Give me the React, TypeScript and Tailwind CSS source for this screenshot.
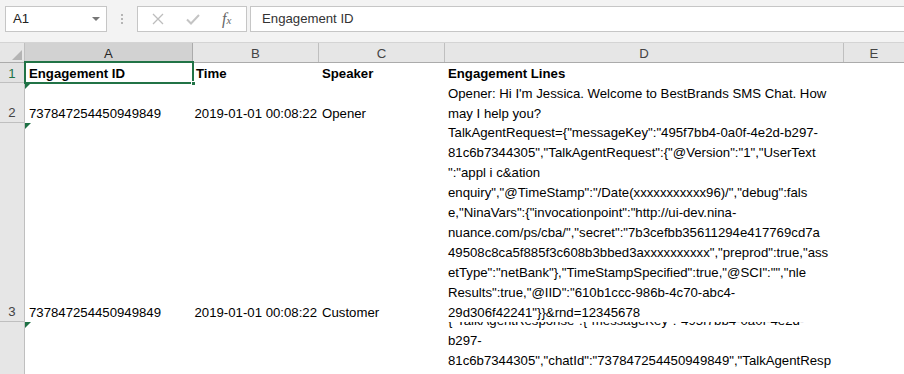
import React from 'react'

const row2 = ["Opener: Hi I'm Jessica. Welcome to BestBrands SMS Chat. How", 'may I help you?']

const row3 = [
  'TalkAgentRequest={"messageKey":"495f7bb4-0a0f-4e2d-b297-',
  '81c6b7344305","TalkAgentRequest":{"@Version":"1","UserText',
  '":"appl i c&ation',
  'enquiry","@TimeStamp":"/Date(xxxxxxxxxxx96)/","debug":fals',
  'e,"NinaVars":{"invocationpoint":"http://ui-dev.nina-',
  'nuance.com/ps/cba/","secret":"7b3cefbb35611294e417769cd7a',
  '49508c8ca5f885f3c608b3bbed3axxxxxxxxxx","preprod":true,"ass',
  'etType":"netBank"},"TimeStampSpecified":true,"@SCI":"","nle',
  'Results":true,"@IID":"610b1ccc-986b-4c70-abc4-',
  '29d306f42241"}}&rnd=12345678',
]

const row4 = [
  '{"TalkAgentResponse":{"messageKey":"495f7bb4-0a0f-4e2d-',
  'b297-',
  '81c6b7344305","chatId":"737847254450949849","TalkAgentResp',
  'onse":{"@Version":"1","Response":"',
]

const Flag = () => (
  <span className="absolute left-0 top-0 w-0 h-0 border-t-[6px] border-t-[#1e7145] border-r-[6px] border-r-transparent" />
)

function Lines({ lines }: { lines: string[] }) {
  return (
    <div className="h-full overflow-y-clip overflow-x-visible flex flex-col justify-end pl-[3px]">
      {lines.map((l, i) => (
        <div key={i} className="leading-[20px] whitespace-pre shrink-0 translate-y-[1px]">
          {l}
        </div>
      ))}
    </div>
  )
}

function Row({
  n,
  h,
  id,
  time,
  speaker,
  lines,
}: {
  n: number
  h: string
  id: string
  time: string
  speaker: string
  lines: string[]
}) {
  return (
    <div className={`flex ${h}`}>
      <div className="w-[25px] shrink-0 bg-[#e6e6e6] border-r border-b border-[#bfbfbf] flex items-end justify-center leading-[20px] text-[#444]">
        <span className="translate-y-[1px]">{n}</span>
      </div>
      <div className="relative w-[168px] shrink-0 flex items-end pl-[4px] leading-[20px] whitespace-nowrap">
        <Flag />
        <span className="translate-y-[1px]">{id}</span>
      </div>
      <div className="w-[126px] shrink-0 flex items-end justify-end pr-[2px] leading-[20px] whitespace-nowrap">
        <span className="translate-y-[1px]">{time}</span>
      </div>
      <div className="w-[126px] shrink-0 flex items-end pl-[3px] leading-[20px] whitespace-nowrap">
        <span className="translate-y-[1px]">{speaker}</span>
      </div>
      <div className="w-[399px] shrink-0">
        <Lines lines={lines} />
      </div>
      <div className="flex-1" />
    </div>
  )
}

export default function App() {
  return (
    <div className="w-[904px] h-[374px] overflow-hidden bg-white text-[13.2px] text-black font-['Liberation_Sans',Arial,sans-serif]">
      {/* formula bar */}
      <div className="h-[43px] bg-[#f3f3f3] flex items-start pt-[6px] border-b border-[#d4d4d4]">
        <div className="ml-[5px] w-[102px] h-[26px] bg-white border border-[#c6c6c6] flex items-center pl-[7px] text-[#222]">
          <span className="flex-1">A1</span>
          <span className="mr-[6px] w-0 h-0 border-l-[4px] border-l-transparent border-r-[4px] border-r-transparent border-t-[4px] border-t-[#777]" />
        </div>
        <div className="w-[30px] h-[26px] flex flex-col items-center justify-center gap-[2px]">
          <span className="w-[2px] h-[2px] bg-[#b5b5b5]" />
          <span className="w-[2px] h-[2px] bg-[#b5b5b5]" />
          <span className="w-[2px] h-[2px] bg-[#b5b5b5]" />
        </div>
        <div className="w-[110px] h-[26px] bg-white border border-[#c6c6c6] flex items-center">
          <svg width="12" height="12" viewBox="0 0 12 12" className="ml-[14px]">
            <path d="M1 1 L11 11 M11 1 L1 11" stroke="#bdbdbd" strokeWidth="1.3" fill="none" />
          </svg>
          <svg width="14" height="12" viewBox="0 0 14 12" className="ml-[22px]">
            <path d="M1 6.5 L5 10.5 L13 2" stroke="#c4c4c4" strokeWidth="2" fill="none" />
          </svg>
          <span className="ml-[22px] font-['Liberation_Serif',serif] italic text-[#666] text-[16px] leading-none">
            f<span className="text-[11px]">x</span>
          </span>
        </div>
        <div className="ml-[3px] flex-1 h-[26px] bg-white border border-r-0 border-[#c6c6c6] flex items-center pl-[11px] text-[#333]">
          Engagement ID
        </div>
      </div>

      {/* column headers */}
      <div className="flex h-[20px] bg-[#e6e6e6] border-b border-[#ababab] text-[#444] leading-[21px]">
        <div className="w-[25px] shrink-0 border-r border-[#bfbfbf] flex items-end justify-end pr-[2px] pb-[2px]">
          <span className="w-0 h-0 border-l-[10px] border-l-transparent border-b-[10px] border-b-[#b4b4b4]" />
        </div>
        <div className="w-[168px] shrink-0 bg-[#d2d2d2] border-r border-[#ababab] text-center text-[#262626]">A</div>
        <div className="w-[126px] shrink-0 border-r border-[#bfbfbf] text-center">B</div>
        <div className="w-[126px] shrink-0 border-r border-[#bfbfbf] text-center">C</div>
        <div className="w-[399px] shrink-0 border-r border-[#bfbfbf] text-center">D</div>
        <div className="flex-1 text-center">E</div>
      </div>

      {/* row 1 */}
      <div className="flex h-[20px] leading-[21px] font-bold">
        <div className="w-[25px] shrink-0 bg-[#e2e2e2] border-r border-b border-[#bfbfbf] text-center text-[#217346] font-normal">
          1
        </div>
        <div className="relative w-[168px] shrink-0 pl-[4px]">
          Engagement ID
          <div className="absolute left-[-1px] top-[-2px] right-[-1px] bottom-[-1px] border-2 border-[#217346] pointer-events-none" />
          <div className="absolute right-[-3px] bottom-[-3px] w-[5px] h-[5px] bg-[#217346] border border-white" />
        </div>
        <div className="w-[126px] shrink-0 pl-[3px]">Time</div>
        <div className="w-[126px] shrink-0 pl-[3px]">Speaker</div>
        <div className="w-[399px] shrink-0 pl-[3px]">Engagement Lines</div>
        <div className="flex-1" />
      </div>

      <Row n={2} h="h-[40px]" id="737847254450949849" time="2019-01-01 00:08:22" speaker="Opener" lines={row2} />
      <Row n={3} h="h-[199px]" id="737847254450949849" time="2019-01-01 00:08:22" speaker="Customer" lines={row3} />
      <div className="flex h-[68px]">
        <div className="w-[25px] shrink-0 bg-[#e6e6e6] border-r border-[#bfbfbf]" />
        <div className="relative w-[168px] shrink-0">
          <Flag />
        </div>
        <div className="w-[252px] shrink-0" />
        <div className="w-[399px] shrink-0">
          <Lines lines={row4} />
        </div>
      </div>
    </div>
  )
}
